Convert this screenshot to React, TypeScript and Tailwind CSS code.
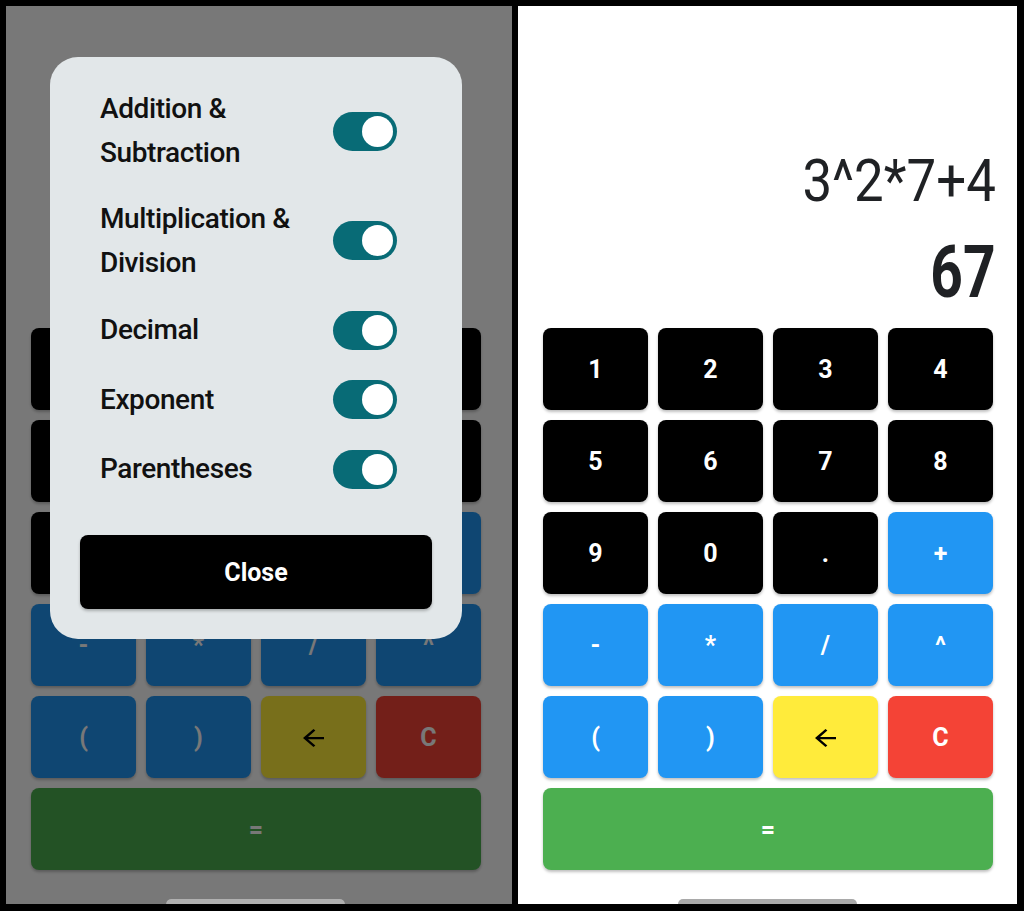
import { useState } from 'react';

type Key = { label: string; kind: 'num' | 'op' | 'back' | 'clear' | 'eq' };

const KEYS: Key[] = [
  { label: '1', kind: 'num' },
  { label: '2', kind: 'num' },
  { label: '3', kind: 'num' },
  { label: '4', kind: 'num' },
  { label: '5', kind: 'num' },
  { label: '6', kind: 'num' },
  { label: '7', kind: 'num' },
  { label: '8', kind: 'num' },
  { label: '9', kind: 'num' },
  { label: '0', kind: 'num' },
  { label: '.', kind: 'num' },
  { label: '+', kind: 'op' },
  { label: '-', kind: 'op' },
  { label: '*', kind: 'op' },
  { label: '/', kind: 'op' },
  { label: '^', kind: 'op' },
  { label: '(', kind: 'op' },
  { label: ')', kind: 'op' },
  { label: '←', kind: 'back' },
  { label: 'C', kind: 'clear' },
  { label: '=', kind: 'eq' },
];

const kindClass: Record<Key['kind'], string> = {
  num: 'bg-black text-white',
  op: 'bg-[#2196f3] text-white',
  back: 'bg-[#ffeb3b] text-black',
  clear: 'bg-[#f44336] text-white',
  eq: 'col-span-4 bg-[#4caf50] text-white',
};

const OPTIONS = ['Addition & Subtraction', 'Multiplication & Division', 'Decimal', 'Exponent', 'Parentheses'];

function BackArrow() {
  return (
    <svg width="21" height="18" viewBox="4 4 16 16" preserveAspectRatio="none" fill="currentColor">
      <path d="M20 11H7.83l5.59-5.59L12 4l-8 8 8 8 1.41-1.41L7.83 13H20v-2z" />
    </svg>
  );
}

function Calculator({ expression, result }: { expression?: string; result?: string }) {
  return (
    <div className="flex h-full w-[499px] flex-col bg-white">
      <div className="flex h-[322px] flex-col items-end justify-end pr-[21px] pb-[19px] text-[#1f2124]">
        {expression && (
          <div className="mb-[26px] text-[60px] leading-[60px]">
            <span className="inline-block origin-right scale-x-[0.88]">{expression}</span>
          </div>
        )}
        {result && (
          <div className="text-[72px] leading-[72px] font-bold">
            <span className="inline-block origin-right scale-x-[0.79]">{result}</span>
          </div>
        )}
      </div>
      <div className="grid grid-cols-[repeat(4,105px)] gap-[10px] pl-[25px]">
        {KEYS.map((k) => (
          <button
            key={k.label}
            type="button"
            className={`flex h-[82px] items-center justify-center rounded-[8px] pt-[2px] text-[25px] font-bold shadow-[0_2px_3px_rgba(0,0,0,0.25)] ${kindClass[k.kind]}`}
          >
            {k.kind === 'back' ? <BackArrow /> : k.label}
          </button>
        ))}
      </div>
      <div className="mt-auto flex justify-center">
        <div className="h-[5px] w-[179px] rounded-t-full bg-[#a9a9a9]" />
      </div>
    </div>
  );
}

function Toggle({ on, onChange }: { on: boolean; onChange: () => void }) {
  return (
    <button
      type="button"
      onClick={onChange}
      className={`flex h-[39px] w-[64px] shrink-0 items-center rounded-full px-[4px] ${
        on ? 'justify-end bg-[#086b76]' : 'justify-start bg-[#9aa3a6]'
      }`}
    >
      <span className="h-[31px] w-[31px] rounded-full bg-white" />
    </button>
  );
}

function SettingsDialog() {
  const [enabled, setEnabled] = useState<boolean[]>(OPTIONS.map(() => true));

  return (
    <div className="absolute top-[51px] left-[44px] w-[412px] rounded-[28px] bg-[#e2e7e9] p-[30px]">
      <div className="flex flex-col gap-[21.5px] pr-[35px] pl-[20px]">
        {OPTIONS.map((opt, i) => (
          <div key={opt} className="flex min-h-[48px] items-center gap-[16px]">
            <span className="flex-1 text-[28px] leading-[44px] font-medium tracking-[-0.4px] text-[#111]">
              {opt}
            </span>
            <Toggle
              on={enabled[i]}
              onChange={() => setEnabled((prev) => prev.map((v, j) => (j === i ? !v : v)))}
            />
          </div>
        ))}
      </div>
      <button
        type="button"
        className="mt-[41.5px] flex h-[74px] w-full items-center justify-center rounded-[8px] bg-black pt-[3px] text-[25px] font-bold text-white shadow-[0_2px_3px_rgba(0,0,0,0.25)]"
      >
        Close
      </button>
    </div>
  );
}

export default function App() {
  return (
    <div className="flex h-[911px] w-[1024px] gap-[6px] bg-black pt-[6px] pl-[6px] font-['Roboto',sans-serif]">
      <div className="relative h-[898px] w-[506px] overflow-hidden bg-white">
        <Calculator />
        <div className="absolute inset-0 bg-black/[0.53]" />
        <div className="absolute bottom-0 left-0 flex w-[499px] justify-center">
          <div className="h-[5px] w-[179px] rounded-t-full bg-[#b0b0b0]" />
        </div>
        <SettingsDialog />
      </div>
      <div className="h-[898px] w-[499px] overflow-hidden">
        <Calculator expression="3^2*7+4" result="67" />
      </div>
    </div>
  );
}
